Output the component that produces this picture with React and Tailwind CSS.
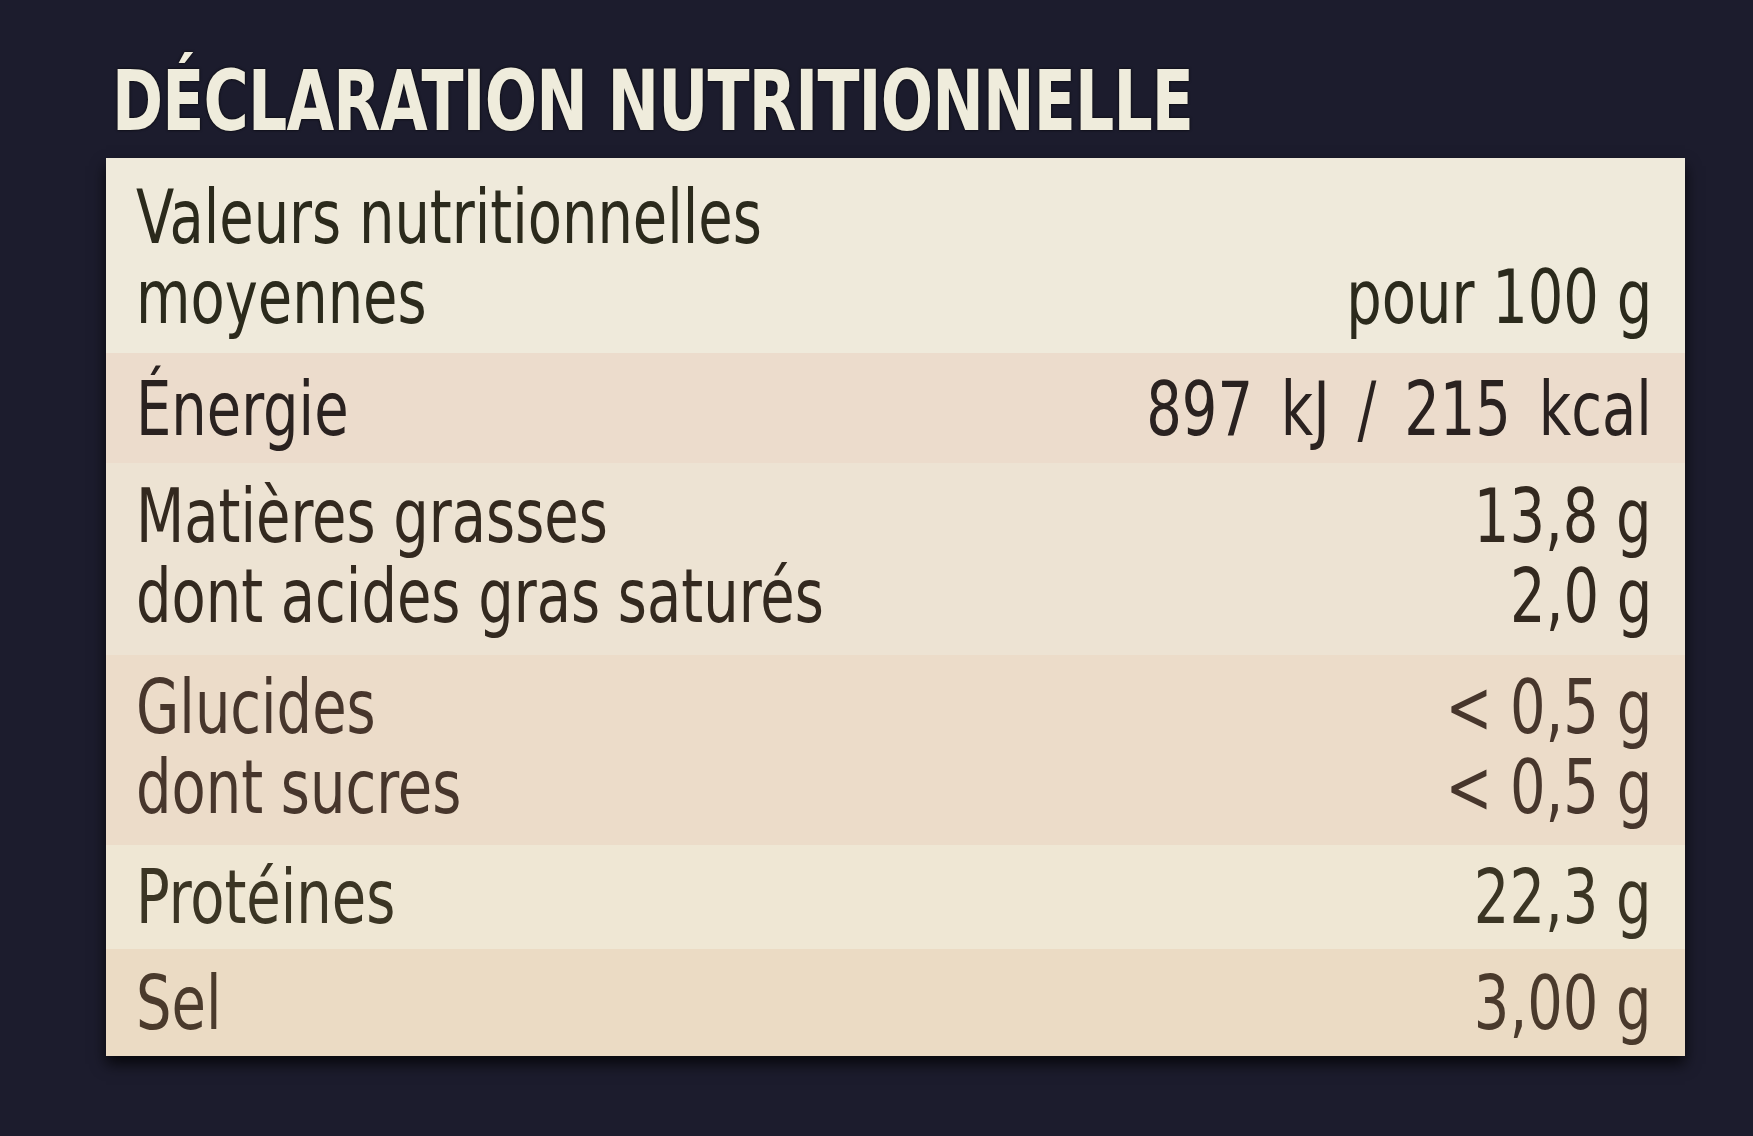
import React from "react";

const font = {
  fontFamily: "'Liberation Sans Narrow', 'DejaVu Sans Condensed', 'Liberation Sans', sans-serif",
};

function Row({ bg, text, lines, h, pt }) {
  return (
    <div className={`flex flex-col ${bg} ${text} ${h} ${pt} pl-[30px] pr-[33px]`}>
      {lines.map((l, i) => (
        <div key={i} className="flex justify-between items-baseline h-[80px] leading-[80px] whitespace-nowrap">
          <span className="inline-block origin-left scale-x-[0.84]">{l.label}</span>
          <span className={`inline-block origin-right scale-x-[0.84] ${l.wide ? "[word-spacing:12px]" : ""}`}>
            {l.value}
          </span>
        </div>
      ))}
    </div>
  );
}

export default function App() {
  return (
    <div
      className="w-[1753px] h-[1136px] bg-[#1c1c2d] overflow-hidden pt-[59px] pl-[106px]"
      style={font}
    >
      <div className="h-[84px] leading-[84px] text-[84px] font-bold text-[#efecdc] pl-[6px] tracking-[-1px] whitespace-nowrap">
        <span className="inline-block origin-left scale-x-[0.815] [text-shadow:0_0_3px_#000]">
          DÉCLARATION NUTRITIONNELLE
        </span>
      </div>
      <div className="mt-[15px] w-[1579px] h-[898px] flex flex-col text-[74px] shadow-[0_8px_14px_rgba(0,0,0,0.75)]">
        <Row
          bg="bg-[#efeadb]"
          text="text-[#2b2a1c]"
          h="h-[195px]"
          pt="pt-[19px]"
          lines={[
            { label: "Valeurs nutritionnelles", value: "" },
            { label: "moyennes", value: "pour 100 g" },
          ]}
        />
        <Row
          bg="bg-[#ecdccc]"
          text="text-[#2a2220]"
          h="h-[110px]"
          pt="pt-[16px]"
          lines={[{ label: "Énergie", value: "897 kJ / 215 kcal", wide: true }]}
        />
        <Row
          bg="bg-[#ede3d3]"
          text="text-[#33291f]"
          h="h-[192px]"
          pt="pt-[13px]"
          lines={[
            { label: "Matières grasses", value: "13,8 g" },
            { label: "dont acides gras saturés", value: "2,0 g" },
          ]}
        />
        <Row
          bg="bg-[#ecdcc9]"
          text="text-[#47362c]"
          h="h-[190px]"
          pt="pt-[12px]"
          lines={[
            { label: "Glucides", value: "< 0,5 g" },
            { label: "dont sucres", value: "< 0,5 g" },
          ]}
        />
        <Row
          bg="bg-[#efe7d4]"
          text="text-[#3b3524]"
          h="h-[104px]"
          pt="pt-[12px]"
          lines={[{ label: "Protéines", value: "22,3 g" }]}
        />
        <Row
          bg="bg-[#ebdbc4]"
          text="text-[#4a3a2c]"
          h="h-[107px]"
          pt="pt-[14px]"
          lines={[{ label: "Sel", value: "3,00 g" }]}
        />
      </div>
    </div>
  );
}
